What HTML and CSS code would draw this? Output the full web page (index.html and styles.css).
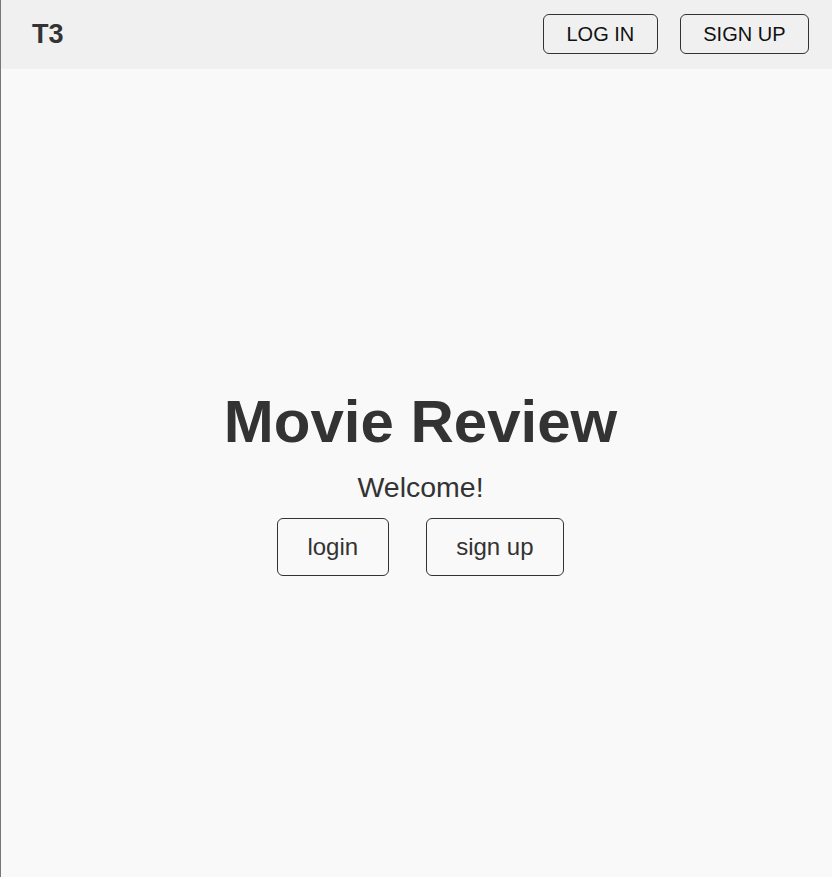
FILE: index.html
```html
<!DOCTYPE html>
<html lang="en">
<head>
<meta charset="utf-8">
<title>Movie Review</title>
<link rel="stylesheet" href="styles.css">
</head>
<body>
<div class="page">
  <header class="topbar">
    <div class="brand">T3</div>
    <nav class="nav">
      <button class="nav-btn">LOG IN</button>
      <button class="nav-btn">SIGN UP</button>
    </nav>
  </header>
  <main class="hero">
    <h1 class="title">Movie Review</h1>
    <p class="welcome">Welcome!</p>
    <div class="actions">
      <button class="action-btn">login</button>
      <button class="action-btn">sign up</button>
    </div>
  </main>
</div>
</body>
</html>
```

FILE: styles.css
```css
html, body {
  margin: 0;
  padding: 0;
  height: 100%;
}
body {
  font-family: "Liberation Sans", Arial, sans-serif;
  background: #f9f9f9;
  color: #333;
}
.page {
  box-sizing: border-box;
  min-height: 100%;
  border-left: 1px solid #777;
  display: flex;
  flex-direction: column;
}
.topbar {
  height: 69px;
  background: #f0f0f0;
  display: flex;
  align-items: center;
  justify-content: space-between;
  padding: 0 23px 0 31px;
  flex-shrink: 0;
}
.brand {
  font-size: 27px;
  font-weight: bold;
  color: #333;
  margin-top: -1px;
}
.nav {
  display: flex;
  gap: 22px;
  margin-top: -1px;
}
.nav-btn {
  font-family: "Liberation Sans", Arial, sans-serif;
  font-size: 20px;
  color: #111;
  background: transparent;
  border: 1px solid #333;
  border-radius: 6px;
  height: 40px;
  padding: 0 22.5px;
}
.hero {
  flex: 1;
  display: flex;
  flex-direction: column;
  align-items: center;
  justify-content: center;
  padding: 17px 0 0 8px;
}
.title {
  margin: 0;
  font-size: 60px;
  font-weight: bold;
  color: #333;
}
.welcome {
  margin: 15px 0 0;
  font-size: 28.5px;
  color: #333;
}
.actions {
  display: flex;
  gap: 37px;
  margin-top: 14px;
}
.action-btn {
  font-family: "Liberation Sans", Arial, sans-serif;
  font-size: 24px;
  color: #333;
  background: transparent;
  border: 1px solid #333;
  border-radius: 6px;
  height: 58px;
  padding: 0 29.5px;
}
```
